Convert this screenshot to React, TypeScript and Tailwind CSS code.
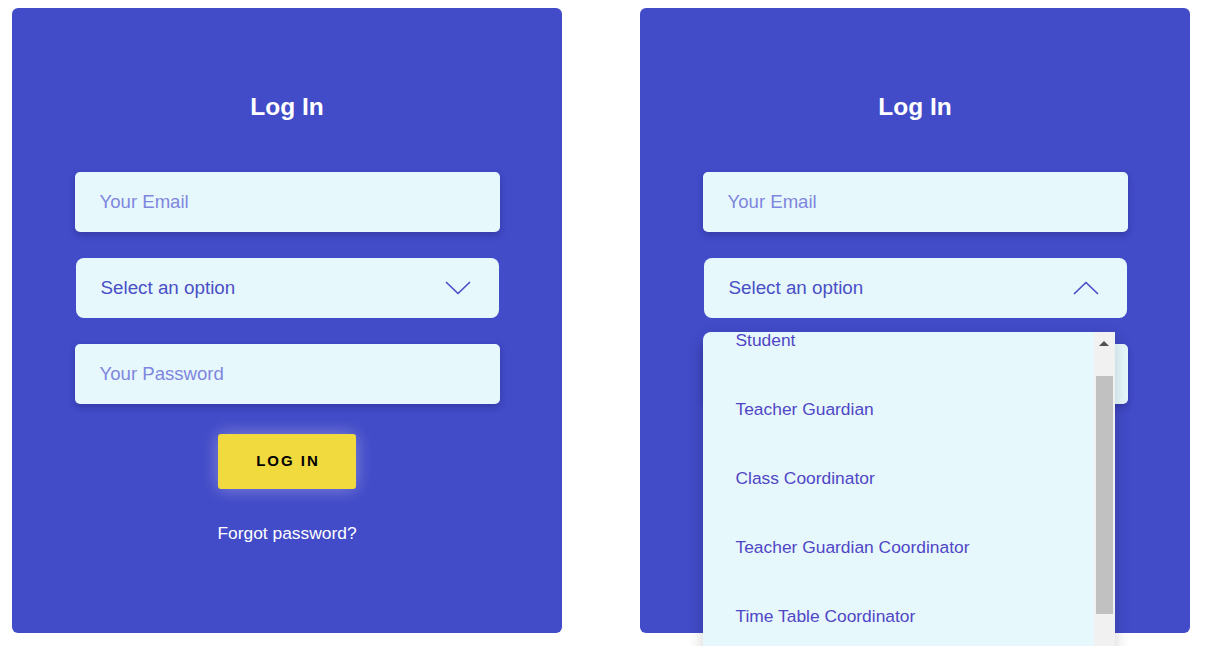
import React from "react";

const font = { fontFamily: '"Liberation Sans", Arial, sans-serif' };

function Chevron({ up }: { up?: boolean }) {
  return (
    <svg width="26" height="14" viewBox="0 0 26 14" fill="none" className="shrink-0">
      <path
        d={up ? "M1.5 12.5 L13 1.5 L24.5 12.5" : "M1.5 1.5 L13 12.5 L24.5 1.5"}
        stroke="#4a4fc6"
        strokeWidth="1.7"
        strokeLinecap="round"
        strokeLinejoin="round"
      />
    </svg>
  );
}

function Card({ open }: { open?: boolean }) {
  const items = [
    "Student",
    "Teacher Guardian",
    "Class Coordinator",
    "Teacher Guardian Coordinator",
    "Time Table Coordinator",
  ];
  return (
    <div className="w-[550px] h-[625px] shrink-0 rounded-[6px] bg-[#424bc8] flex flex-col items-center pt-[85px]">
      <h1 className="text-white font-bold text-[24.5px] leading-[28px]">Log In</h1>
      <div className="mt-[51px] w-[425px] h-[60px] rounded-[5px] bg-[#e6f8fc] shadow-[0_3px_6px_rgba(30,30,110,0.35)] flex items-center pl-[25px] text-[18.6px] text-[#7f86de]">
        Your Email
      </div>
      <div className="relative mt-[26px] w-[423px] h-[60px] rounded-[8px] bg-[#e6f8fc] flex items-center justify-between pl-[25px] pr-[28px] text-[18.8px] text-[#4a4fc6]">
        <span>Select an option</span>
        <Chevron up={open} />
        {open && (
          <div className="absolute left-[-1px] top-[74px] w-[412px] h-[330px] z-10 flex rounded-tl-[8px] overflow-hidden bg-[#e6f8fc] shadow-[0_6px_16px_rgba(0,0,0,0.18)]">
            <div className="flex-1 overflow-hidden">
              <div className="-mt-[26px] flex flex-col">
                {items.map((t) => (
                  <div key={t} className="h-[69px] shrink-0 flex items-center pl-[33px] text-[17.4px] text-[#5046c6]">
                    {t}
                  </div>
                ))}
              </div>
            </div>
            <div className="w-[21px] flex flex-col items-center bg-[#f1f1f1]">
              <div className="h-[22px] w-full flex items-start justify-center pt-[9px]">
                <div className="w-0 h-0 border-l-[5px] border-r-[5px] border-b-[5px] border-l-transparent border-r-transparent border-b-[#505050]" />
              </div>
              <div className="mt-[22px] w-[17px] h-[238px] bg-[#c1c1c1]" />
            </div>
          </div>
        )}
      </div>
      <div className="mt-[26px] w-[425px] h-[60px] rounded-[5px] bg-[#e6f8fc] shadow-[0_3px_6px_rgba(30,30,110,0.35)] flex items-center pl-[25px] text-[18.6px] text-[#7f86de]">
        Your Password
      </div>
      <button className="mt-[30px] w-[138px] h-[55px] rounded-[3px] bg-[#f0da3e] shadow-[0_0_18px_rgba(255,255,255,0.35)] text-black font-bold text-[15px] tracking-[2px] pl-[2px]">
        LOG IN
      </button>
      <div className="mt-[34px] text-white text-[17.4px] leading-[20px]">Forgot password?</div>
    </div>
  );
}

export default function App() {
  return (
    <div style={font} className="w-[1222px] h-[646px] overflow-hidden bg-white flex gap-[78px] pl-[12px] pt-[8px]">
      <Card />
      <Card open />
    </div>
  );
}
